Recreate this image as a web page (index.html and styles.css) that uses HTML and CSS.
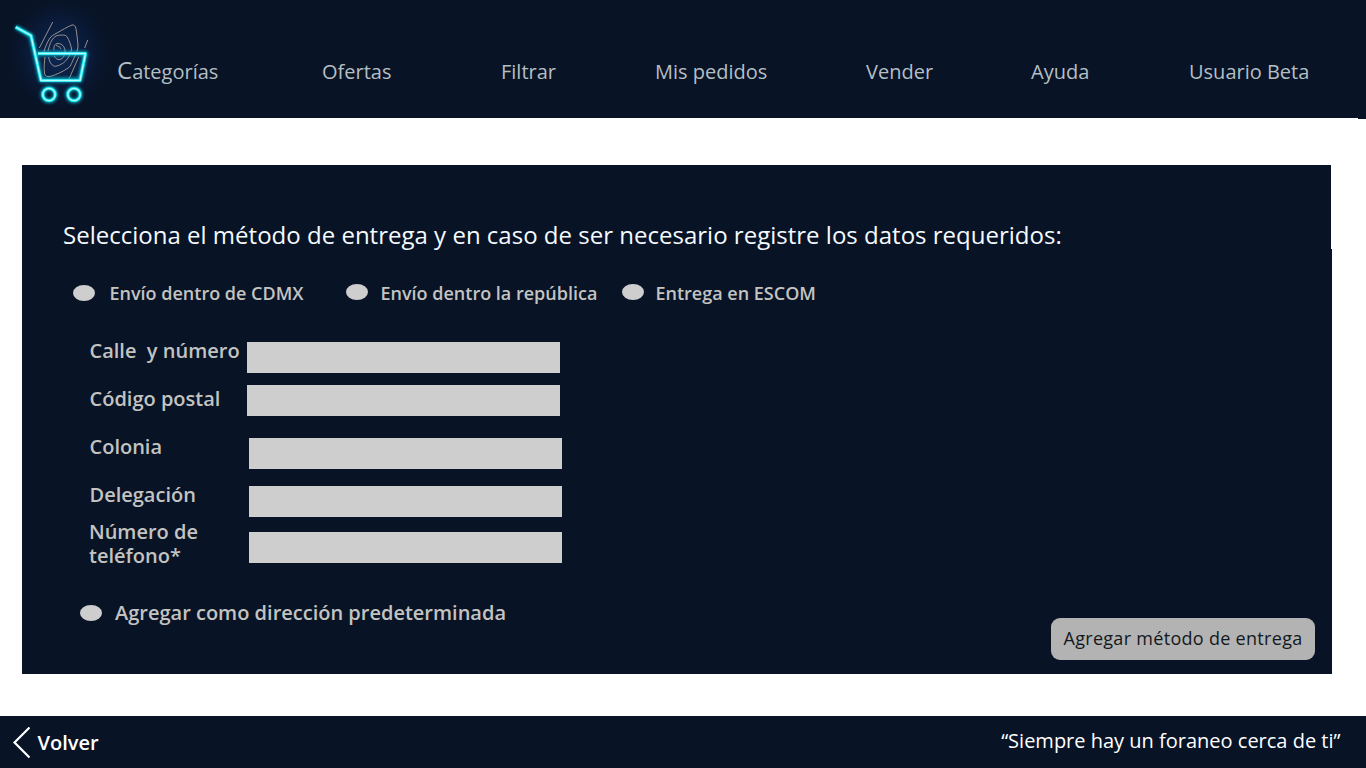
FILE: index.html
```html
<!DOCTYPE html>
<html lang="es">
<head>
<meta charset="utf-8">
<title>Método de entrega</title>
<link rel="stylesheet" href="styles.css">
</head>
<body>
<header class="header">
  <svg class="logo" width="117" height="118" viewBox="0 0 117 118" fill="none">
    <defs>
      <radialGradient id="halo">
        <stop offset="0" stop-color="#0f2f60" stop-opacity=".8"/>
        <stop offset=".6" stop-color="#0b2149" stop-opacity=".5"/>
        <stop offset="1" stop-color="#081326" stop-opacity="0"/>
      </radialGradient>
      <filter id="glow" x="-20%" y="-20%" width="140%" height="140%"><feGaussianBlur stdDeviation="1.5"/></filter>
    </defs>
    <ellipse cx="59" cy="54" rx="54" ry="60" fill="url(#halo)"/>
    <g stroke="#a89c96" stroke-width=".9" stroke-linejoin="round">
      <path d="M52.700 22L39.300 48M87.700 40L84.700 48M78.700 57L69 79"/>
      <path d="M43.700 53C45 47 47 43 49.300 39C51 36 54 34.500 57 33C62 30 67 27 72 25C74 24.500 75.500 26 76 28.700C77 34 77.500 40 78 46C78 50 76 54 74 58C72 62 71 66 68.700 67.700C63 71.500 56 75 50 76.500C47 77 45 76 44.700 74C43.500 68 44.500 62 45 57"/>
      <path d="M48 51C49 47 50 43 52 40C54 37 56 35.500 58.700 35.300C62 35 65.500 34.500 67 36.700C69 40 71 45 71.500 49C71 54 68 59 63.700 62.700C60 65 56 67 53.700 66C50.500 64 49 61 48.700 57"/>
      <path d="M54 50C53.500 46 55 43.500 58 43.500C62 43.500 65 47 65 51C65 55 63 59 60 59.500C57 60 55 58 54.500 56M56 45C58 47 60 46 61 49"/>
    </g>
    <g stroke="#08b9d2" stroke-width="4.800" stroke-linejoin="round" opacity=".85" filter="url(#glow)">
      <path d="M16 27L31 36L41 80H80L85.500 53.500H38"/>
      <circle cx="49" cy="94.500" r="6.300"/><circle cx="74" cy="94.500" r="6.300"/>
    </g>
    <g stroke="#12e2ec" stroke-width="3.200" stroke-linejoin="round">
      <path d="M15.500 27L31 35.500L41 80.500H80L85.500 53.500H38"/>
      <circle cx="49" cy="94.500" r="6.200"/><circle cx="74" cy="94.500" r="6.200"/>
    </g>
    <g stroke="#b5ffff" stroke-width="1.300" stroke-linejoin="round">
      <path d="M16 27.300L31 35.500L41 80.500H80L85.500 53.500H38"/>
      <circle cx="49" cy="94.500" r="6.200"/><circle cx="74" cy="94.500" r="6.200"/>
    </g>
  </svg>
  <nav class="nav">
    <a><span class="nav-initial">C</span>ategorías</a>
    <a>Ofertas</a>
    <a>Filtrar</a>
    <a>Mis pedidos</a>
    <a>Vender</a>
    <a>Ayuda</a>
    <a>Usuario Beta</a>
  </nav>
</header>
<main class="panel">
  <h1 class="title">Selecciona el método de entrega y en caso de ser necesario registre los datos requeridos:</h1>
  <div class="options">
    <label class="option option-city"><i class="dot"></i><span>Envío dentro de CDMX</span></label>
    <label class="option option-country"><i class="dot"></i><span>Envío dentro la república</span></label>
    <label class="option option-school"><i class="dot"></i><span>Entrega en ESCOM</span></label>
  </div>
  <div class="form">
    <div class="labels">
      <label>Calle&nbsp; y número</label>
      <label>Código postal</label>
      <label>Colonia</label>
      <label>Delegación</label>
      <label class="label-phone">Número de<br>teléfono*</label>
    </div>
    <div class="fields">
      <div class="field"></div>
      <div class="field field-zip"></div>
      <div class="field field-colony"></div>
      <div class="field field-district"></div>
      <div class="field field-phone"></div>
    </div>
  </div>
  <div class="bottom">
    <label class="default"><i class="dot"></i><span>Agregar como dirección predeterminada</span></label>
    <button class="submit"><span>Agregar método de entrega</span></button>
  </div>
</main>
<footer class="footer">
  <a class="back">
    <svg width="18" height="32" viewBox="0 0 18 32" fill="none" stroke="#fff" stroke-width="2.200"><path d="M17.500 .5L2.500 15.500L17.500 30.500"/></svg>
    <span>Volver</span>
  </a>
  <p class="slogan">“Siempre hay un foraneo cerca de ti”</p>
</footer>
</body>
</html>
```
FILE: styles.css
```css
* { box-sizing: border-box; }
body {
  margin: 0;
  width: 1366px;
  height: 768px;
  overflow: hidden;
  background: #fff;
  font-family: "Open Sans", "Noto Sans", sans-serif;
}
.header {
  display: flex;
  height: 119px;
  background: #081326;
  clip-path: polygon(0 0, 100% 0, 100% 119px, 1358px 119px, 1358px 118px, 0 118px);
}
.logo { flex: none; }
.nav {
  display: grid;
  grid-template-columns: 205px 179px 154px 211px 165px 158px auto;
  height: 28px;
  margin-top: 58px;
  font-size: 20px;
  line-height: 28px;
  color: #b4bfc4;
  white-space: nowrap;
}
.nav-initial { font-size: 24px; line-height: 1; }
.panel {
  width: 1310px;
  height: 509px;
  margin: 46px 0 0 22px;
  padding-top: 53px;
  background: #081326;
  color: #c3c3c1;
  clip-path: polygon(0 0, 1309px 0, 1309px 84px, 100% 84px, 100% 100%, 0 100%);
}
.title {
  margin: 0 0 0 41px;
  font-size: 24px;
  font-weight: 400;
  line-height: 34px;
  letter-spacing: .01px;
  color: #f5faff;
  white-space: nowrap;
}
.options {
  display: flex;
  margin: 29px 0 0 51px;
  height: 24px;
  font-size: 18px;
  font-weight: 600;
  line-height: 24px;
  white-space: nowrap;
}
.option { display: flex; }
.option-city { width: 273px; gap: 14.5px; }
.option-country { width: 276px; gap: 12.5px; }
.option-school { gap: 11.5px; }
.dot {
  flex: none;
  width: 22px;
  height: 16px;
  margin-top: 3px;
  border-radius: 50%;
  background: #cecece;
}
.option-city .dot { margin-top: 4px; }
.form { display: flex; height: 246px; margin: 21px 0 0 67px; }
.labels {
  display: flex;
  flex-direction: column;
  width: 158px;
  padding: 1px 0 0 .5px;
  font-size: 20px;
  font-weight: 600;
  line-height: 48px;
  white-space: nowrap;
}
.label-phone { margin: 1px 0 0 -.5px; line-height: 24px; }
.fields { padding-top: 16px; }
.field { width: 313px; height: 31px; background: #cecece; }
.field-zip { margin-top: 12px; }
.field-colony { margin: 22px 0 0 2px; }
.field-district { margin: 17px 0 0 2px; }
.field-phone { margin: 15px 0 0 2px; }
.bottom {
  display: flex;
  justify-content: space-between;
  align-items: flex-start;
  margin: 29px 17px 0 58px;
}
.default {
  display: flex;
  gap: 13px;
  font-size: 20px;
  font-weight: 600;
  line-height: 24px;
  white-space: nowrap;
}
.default .dot { margin-top: 4px; }
.submit {
  width: 264px;
  height: 42px;
  margin-top: 17px;
  padding: 0 0 2px;
  border: 0;
  border-radius: 9px;
  background: #b3b3b3;
  color: #121820;
  font: 500 18px/40px "Open Sans", "Noto Sans", sans-serif;
  letter-spacing: .3px;
  white-space: nowrap;
}
.footer {
  display: flex;
  justify-content: space-between;
  height: 52px;
  margin-top: 42px;
  padding: 0 25.5px 0 12px;
  background: #081326;
  color: #fff;
}
.back {
  display: flex;
  gap: 7.5px;
  padding-top: 11px;
  font-size: 20px;
  font-weight: 600;
  line-height: 32px;
}
.slogan { margin: 0; font-size: 20px; line-height: 50px; white-space: nowrap; }
```
